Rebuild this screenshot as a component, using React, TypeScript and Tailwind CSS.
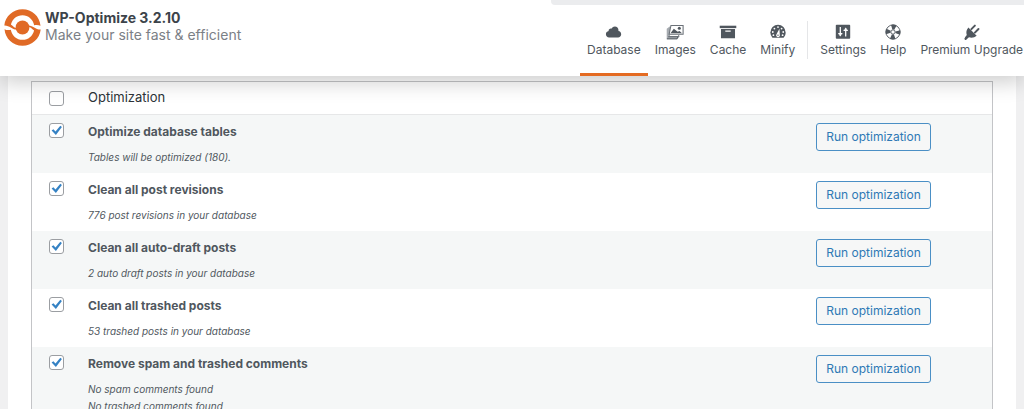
import { useState } from 'react';
import type { ReactNode } from 'react';

interface NavItem {
  label: string;
  icon: ReactNode;
}

interface Optimization {
  id: string;
  title: string;
  info: string[];
}

const MAIN_TABS: NavItem[] = [
  { label: 'Database', icon: <CloudIcon /> },
  { label: 'Images', icon: <ImagesIcon /> },
  { label: 'Cache', icon: <ArchiveIcon /> },
  { label: 'Minify', icon: <GaugeIcon /> },
];

const EXTRA_TABS: NavItem[] = [
  { label: 'Settings', icon: <SlidersIcon /> },
  { label: 'Help', icon: <LifebuoyIcon /> },
  { label: 'Premium Upgrade', icon: <PlugIcon /> },
];

const OPTIMIZATIONS: Optimization[] = [
  { id: 'tables', title: 'Optimize database tables', info: ['Tables will be optimized (180).'] },
  { id: 'revisions', title: 'Clean all post revisions', info: ['776 post revisions in your database'] },
  { id: 'drafts', title: 'Clean all auto-draft posts', info: ['2 auto draft posts in your database'] },
  { id: 'trash', title: 'Clean all trashed posts', info: ['53 trashed posts in your database'] },
  {
    id: 'comments',
    title: 'Remove spam and trashed comments',
    info: ['No spam comments found', 'No trashed comments found'],
  },
];

export default function App() {
  const [activeTab, setActiveTab] = useState('Database');
  const [selected, setSelected] = useState<string[]>(OPTIMIZATIONS.map(o => o.id));
  const [allChecked, setAllChecked] = useState(false);

  const toggle = (id: string) => {
    setSelected(prev => (prev.includes(id) ? prev.filter(s => s !== id) : [...prev, id]));
  };

  const toggleAll = () => {
    setSelected(allChecked ? [] : OPTIMIZATIONS.map(o => o.id));
    setAllChecked(!allChecked);
  };

  return (
    <div className="h-screen overflow-hidden bg-[#f0f0f1] font-['Inter',sans-serif] text-[#3c434a]">
      {/* Header */}
      <header className="relative z-10 bg-white shadow-[0_6px_20px_rgba(0,0,0,0.2)]">
        <div className="flex justify-end">
          <div className="h-[5px] w-[473px] rounded-bl bg-[#ebecee]" />
        </div>
        <div className="flex items-start justify-between">
          <div className="flex gap-1 pl-1 pt-1">
            <Logo />
            <div>
              <h1 className="text-[14px] font-bold leading-[17px]">WP-Optimize 3.2.10</h1>
              <p className="text-[14px] leading-[17px] text-[#7b8086]">Make your site fast &amp; efficient</p>
            </div>
          </div>
          <nav className="-mr-1.5 flex pt-4">
            {MAIN_TABS.map(tab => (
              <Tab key={tab.label} tab={tab} active={tab.label === activeTab} onSelect={setActiveTab} />
            ))}
            <div className="mx-[5px] h-[38px] w-px bg-[#e5e6e8]" />
            {EXTRA_TABS.map(tab => (
              <Tab key={tab.label} tab={tab} active={tab.label === activeTab} onSelect={setActiveTab} />
            ))}
          </nav>
        </div>
      </header>

      {/* Optimizations */}
      <main className="mx-2 bg-white px-[23px] pt-[5px]">
        <table className="w-full table-fixed border-separate border-spacing-0 border border-[#c3c4c7]">
          <thead>
            <tr className="h-[33px] text-left">
              <th className="w-14 border-b border-[#e6e7e8] pl-[17px]">
                <Checkbox label="Select all optimizations" checked={allChecked} onChange={toggleAll} />
              </th>
              <th className="border-b border-[#e6e7e8] text-[13px] font-normal text-[#2c3338]">Optimization</th>
              <th className="w-44 border-b border-[#e6e7e8]" />
            </tr>
          </thead>
          <tbody>
            {OPTIMIZATIONS.map(opt => (
              <tr key={opt.id} className="h-[58px] align-top odd:bg-[#f5f7f7]">
                <td className="pl-[17px] pt-2">
                  <Checkbox label={opt.title} checked={selected.includes(opt.id)} onChange={() => toggle(opt.id)} />
                </td>
                <td className="pb-1 pt-2">
                  <div className="text-[12px] font-bold leading-[18px] text-[#50575e]">{opt.title}</div>
                  <div className="pt-2 text-[10px] italic leading-[17px] text-[#50575e]">
                    {opt.info.map(line => (
                      <p key={line}>{line}</p>
                    ))}
                  </div>
                </td>
                <td className="pt-2">
                  <button
                    type="button"
                    className="h-7 w-[115px] whitespace-nowrap rounded-[3px] border border-[#4a8fc5] bg-[#f6f7f7] text-[12px] text-[#2e79b5]"
                  >
                    Run optimization
                  </button>
                </td>
              </tr>
            ))}
          </tbody>
        </table>
      </main>
    </div>
  );
}

function Tab({ tab, active, onSelect }: { tab: NavItem; active: boolean; onSelect: (label: string) => void }) {
  return (
    <button
      type="button"
      onClick={() => onSelect(tab.label)}
      className={`flex h-[55px] flex-col items-center whitespace-nowrap border-b-[3px] px-[7px] pt-[2px] text-[12px] leading-[18px] text-[#50575e] ${
        active ? 'border-[#e46b22]' : 'border-transparent'
      }`}
    >
      {tab.icon}
      <span>{tab.label}</span>
    </button>
  );
}

function Checkbox({ label, checked, onChange }: { label: string; checked: boolean; onChange: () => void }) {
  return (
    <span className="relative block size-[15px]">
      <input
        type="checkbox"
        aria-label={label}
        checked={checked}
        onChange={onChange}
        className="block size-[15px] appearance-none rounded-[3px] border border-[#9b9ea2] bg-white"
      />
      {checked && (
        <svg className="pointer-events-none absolute inset-0" width="15" height="15" viewBox="0 0 15 15">
          <path d="M2.6 7.6 4.4 6.2 6.5 8.5 11.3 2.8 12.9 4.1 6.9 12Z" fill="#3582c4" />
        </svg>
      )}
    </span>
  );
}

function Logo() {
  return (
    <svg width="37" height="37" viewBox="0 0 37 37" fill="#e06a26">
      <path
        id="swirl"
        d="M.3 16.500C1.300 7.300 9 .3 18.500 .3S35.700 7.300 36.500 16.800C34.500 15.800 32 15.800 30.200 16.300 28.800 10 24.300 6.200 18.500 6.200S8.300 10 6.900 15.600C9.300 17.300 10.500 19 12.500 19.300V20.600C8 20.500 5.500 16.300 .3 16.500z"
      />
      <use href="#swirl" transform="rotate(180 18.5 18.5)" />
      <circle cx="18.500" cy="18.500" r="6.900" />
    </svg>
  );
}

function CloudIcon() {
  return (
    <svg width="18" height="18" viewBox="0 0 20 20" fill="#50575e">
      <path d="M14.9 9c1.8.2 3.1 1.7 3.1 3.5 0 1.9-1.6 3.500-3.500 3.500h-10C2.600 16 1 14.400 1 12.500 1 10.700 2.300 9.300 4.100 9 4 8.900 4 8.700 4 8.500 4 7.100 5.100 6 6.500 6c.3 0 .7.1.9.200C8.100 4.900 9.400 4 11 4c2.200 0 4 1.800 4 4 0 .4-.1.700-.1 1z" />
    </svg>
  );
}

function ImagesIcon() {
  return (
    <svg width="18" height="18" viewBox="0 0 20 20">
      <path d="M4.500 3.500.8 6.500V18h11.700l3-3.500H4.500z" fill="#a6abb0" />
      <path d="M1 17.600h11.300l.8-2M2.500 15.300h11l.8-1.800" stroke="#50575e" strokeWidth="1" fill="none" />
      <path d="M5.500 2.700h13.500v9.800H3.500z" fill="#fff" stroke="#6b7178" strokeWidth="1.200" />
      <path d="m5 11.500 3.700-5 4.300 3.300 2-1 2.800 2.700z" fill="#50575e" />
      <circle cx="14.800" cy="5.800" r="1.700" fill="#50575e" />
    </svg>
  );
}

function ArchiveIcon() {
  return (
    <svg width="18" height="18" viewBox="0 0 20 20" fill="#50575e">
      <path d="M.8 3h18.400v2.700H.8z" />
      <path fillRule="evenodd" d="M2.200 6.700h15.600V17H2.200zM7 8.300v1.400h6V8.300z" />
    </svg>
  );
}

function GaugeIcon() {
  return (
    <svg width="18" height="18" viewBox="0 0 20 20">
      <path d="M10 2a8.500 8.500 0 0 1 8.500 8.500c0 2.300-.9 4.300-2.300 5.800H3.800a8.500 8.500 0 0 1-2.300-5.800A8.500 8.500 0 0 1 10 2z" fill="#50575e" />
      <g fill="#fff">
        <circle cx="10" cy="4.500" r="1" />
        <circle cx="6" cy="6.200" r="1" />
        <circle cx="14" cy="6.200" r="1" />
        <circle cx="4.200" cy="10" r="1" />
        <circle cx="15.800" cy="10" r="1" />
        <circle cx="4.900" cy="13.500" r="1" />
        <circle cx="15.100" cy="13.500" r="1" />
        <path d="M11.600 6.500 12 13a2.100 2.100 0 1 1-3.700-.5z" />
      </g>
      <circle cx="10" cy="13.500" r=".8" fill="#50575e" />
    </svg>
  );
}

function SlidersIcon() {
  return (
    <svg width="18" height="18" viewBox="0 0 20 20">
      <rect x="2" y="2" width="16" height="15.500" rx="1" fill="#50575e" />
      <path d="M7 4.500V14M13 6v9M4.700 11.800h4.600M10.600 8.200h4.800" stroke="#fff" strokeWidth="1.400" fill="none" />
      <path d="m5.300 12.500 1.700 2.500 1.700-2.500zM11.300 7.500 13 5l1.700 2.500z" fill="#fff" />
    </svg>
  );
}

function LifebuoyIcon() {
  return (
    <svg width="18" height="18" viewBox="0 0 20 20" fill="none">
      <circle cx="10" cy="10" r="7.900" stroke="#50575e" strokeWidth="1" />
      <circle
        cx="10"
        cy="10"
        r="5.500"
        stroke="#50575e"
        strokeWidth="5.400"
        strokeDasharray="4.320 4.320"
        strokeDashoffset="2.160"
      />
      <circle cx="10" cy="10" r="2.400" fill="#fff" stroke="#50575e" strokeWidth="1" />
    </svg>
  );
}

function PlugIcon() {
  return (
    <svg width="18" height="18" viewBox="0 0 20 20" fill="none" stroke="#50575e">
      <path d="M6 5 15.200 14.200c-2.500 2-5.700 2.600-8.500 1.600L4 17.800 2.200 16l2-2.700C3.200 10.500 3.800 7.300 6 5z" fill="#50575e" stroke="none" />
      <path d="M9.300 6.800 13.200 2.900M13.200 10.700 17.200 6.700" strokeWidth="2.200" strokeLinecap="round" />
      <path d="M4.500 15.500 2.900 17.500" strokeWidth="2.600" strokeLinecap="round" />
    </svg>
  );
}
